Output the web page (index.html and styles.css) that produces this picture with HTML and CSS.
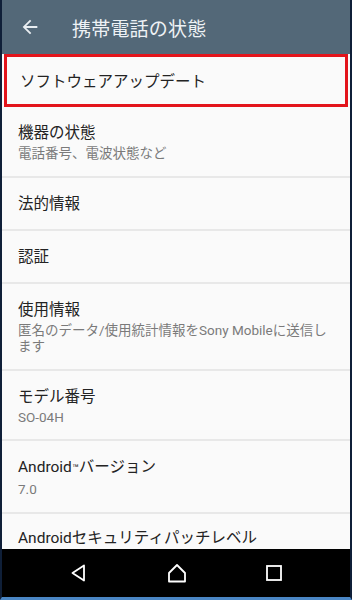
FILE: index.html
```html
<!DOCTYPE html>
<html lang="ja">
<head>
    <meta charset="UTF-8">
    <meta name="viewport" content="width=device-width, initial-scale=1.0">
    <title>携帯電話の状態</title>
    <link rel="stylesheet" href="styles.css">
</head>
<body>
    <div class="screen">
        <div class="toolbar">
            <svg class="back" viewBox="0 0 24 24" width="22" height="22">
                <path d="M20 11H7.83l5.59-5.59L12 4l-8 8 8 8 1.41-1.41L7.83 13H20v-2z" fill="#e9eef2"/>
            </svg>
            <h1>携帯電話の状態</h1>
        </div>

        <div class="list">
            <div class="item single highlight">
                <div class="title">ソフトウェアアップデート</div>
            </div>
            <div class="item">
                <div class="title">機器の状態</div>
                <div class="summary">電話番号、電波状態など</div>
            </div>
            <div class="item single">
                <div class="title">法的情報</div>
            </div>
            <div class="item single">
                <div class="title">認証</div>
            </div>
            <div class="item">
                <div class="title">使用情報</div>
                <div class="summary">匿名のデータ/使用統計情報をSony Mobileに送信します</div>
            </div>
            <div class="item">
                <div class="title">モデル番号</div>
                <div class="summary">SO-04H</div>
            </div>
            <div class="item">
                <div class="title">Android<span class="tm">™</span>バージョン</div>
                <div class="summary">7.0</div>
            </div>
            <div class="item last">
                <div class="title">Androidセキュリティパッチレベル</div>
            </div>
        </div>

        <div class="navbar">
            <svg viewBox="0 0 20 20" width="20" height="20">
                <path d="M15 2.5 L3.5 10 L15 17.5 Z" fill="none" stroke="#fff" stroke-width="1.8" stroke-linejoin="round"/>
            </svg>
            <svg viewBox="0 0 22 22" width="22" height="22">
                <path d="M3 11 L11 3 L19 11 V19.5 H3 Z" fill="none" stroke="#fff" stroke-width="1.8" stroke-linejoin="round"/>
            </svg>
            <svg viewBox="0 0 18 18" width="18" height="18">
                <rect x="2" y="2" width="14" height="14" fill="none" stroke="#fff" stroke-width="1.8"/>
            </svg>
        </div>
    </div>
</body>
</html>
```

FILE: styles.css
```css
* {
    margin: 0;
    padding: 0;
    box-sizing: border-box;
}

html, body {
    width: 352px;
    height: 600px;
    overflow: hidden;
}

body {
    font-family: Roboto, "Noto Sans CJK JP", sans-serif;
    background: #0c1a2e;
}

.screen {
    height: 600px;
    display: flex;
    flex-direction: column;
    border-left: 2px solid #0f1f38;
    border-right: 2px solid #0f1f38;
    border-bottom: 3px solid #4a86c4;
    background: #fafafa;
}

.toolbar {
    height: 54px;
    flex-shrink: 0;
    background: #536878;
    display: flex;
    align-items: center;
    padding-left: 17px;
}

.toolbar .back {
    margin-right: 31px;
}

.toolbar h1 {
    color: #eef2f5;
    font-size: 19px;
    font-weight: 400;
    letter-spacing: 0.2px;
}

.list {
    flex: 1;
    overflow: hidden;
    background: #fafafa;
}

.item {
    padding: 16px 16px 14px 16px;
    border-bottom: 2px solid #e8e8e8;
}

.item.single {
    height: 53px;
    display: flex;
    align-items: center;
    padding-top: 2px;
    padding-bottom: 0;
}

.item.last {
    padding-top: 14px;
    border-bottom: none;
}

.highlight {
    height: 52px;
    outline: 3px solid #e3141b;
    outline-offset: -3px;
    margin: 0 2px;
    border-bottom: none;
}

.title {
    font-size: 15.5px;
    line-height: 20px;
    color: #232323;
}

.title .tm {
    font-size: 11px;
}

.summary {
    font-size: 13.5px;
    line-height: 16.5px;
    color: #7a7a7a;
    margin-top: 2px;
}

.navbar {
    height: 48px;
    flex-shrink: 0;
    background: #000;
    display: flex;
    align-items: center;
    justify-content: space-around;
    padding: 0 29px;
}
```
